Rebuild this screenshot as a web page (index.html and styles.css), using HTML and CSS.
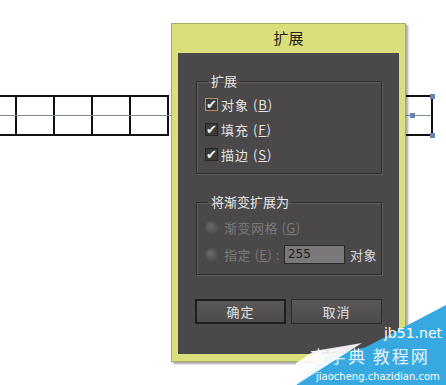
FILE: index.html
```html
<!DOCTYPE html>
<html lang="zh">
<head>
    <meta charset="UTF-8">
    <title>扩展</title>
    <link rel="stylesheet" href="styles.css">
</head>
<body>

    <!-- Artboard behind the dialog -->
    <div class="canvas">
        <div class="grid">
            <div class="cell"></div>
            <div class="cell"></div>
            <div class="cell"></div>
            <div class="cell"></div>
            <div class="cell"></div>
        </div>
        <div class="guide"></div>
        <div class="bracket"></div>
        <span class="handle h1"></span>
        <span class="handle h2"></span>
        <span class="handle h3"></span>
    </div>

    <!-- Expand dialog -->
    <div class="dialog">
        <div class="dialog-title">扩展</div>
        <div class="dialog-body">

            <fieldset class="group">
                <legend>扩展</legend>
                <label class="check focus"><span class="box">&#10004;</span>对象 (<u>B</u>)</label>
                <label class="check"><span class="box">&#10004;</span>填充 (<u>F</u>)</label>
                <label class="check"><span class="box">&#10004;</span>描边 (<u>S</u>)</label>
            </fieldset>

            <fieldset class="group group-gradient">
                <legend>将渐变扩展为</legend>
                <label class="radio"><span class="dot"></span>渐变网格 (<u>G</u>)</label>
                <label class="radio"><span class="dot"></span>指定 (<u>E</u>) :<span class="num">255</span><span class="unit">对象</span></label>
            </fieldset>

            <div class="buttons">
                <button class="btn default">确定</button>
                <button class="btn">取消</button>
            </div>
        </div>
    </div>

    <!-- Site watermark -->
    <div class="mark">
        <svg class="mark-bg" width="150" height="80" viewBox="0 0 150 80">
            <polygon points="150,0 150,80 0,80 30,52 70,42" fill="#37a9e0"/>
            <polygon points="18,46 66,38 0,80 0,58" fill="#ffffff" opacity="0.9"/>
        </svg>
        <span class="mark-site">jb51.net</span>
        <span class="mark-cn">查字典 教程网</span>
        <span class="mark-url">jiaocheng.chazidian.com</span>
    </div>

</body>
</html>
```

FILE: styles.css
```css
/* Page */
body {
    margin: 0;
    width: 446px;
    height: 385px;
    overflow: hidden;
    background-color: #ffffff;
    font-family: "Noto Sans CJK SC", "DejaVu Sans", sans-serif;
    position: relative;
}

/* Artboard */
.canvas {
    position: absolute;
    left: 0;
    top: 0;
    width: 446px;
    height: 385px;
}

.grid {
    position: absolute;
    left: -21px;
    top: 95px;
    display: flex;
    border-top: 2px solid #111;
    border-bottom: 2px solid #111;
}

.cell {
    width: 36px;
    height: 37px;
    border-right: 2px solid #111;
}

.guide {
    position: absolute;
    left: 0;
    top: 115px;
    width: 432px;
    height: 1px;
    background-color: #7f8ca0;
}

.bracket {
    position: absolute;
    left: 400px;
    top: 95px;
    width: 31px;
    height: 37px;
    border: 2px solid #111;
    border-left: none;
}

.handle {
    position: absolute;
    width: 5px;
    height: 5px;
    background-color: #6b82b8;
}

.h1 { left: 430px; top: 94px; }
.h2 { left: 430px; top: 133px; }
.h3 { left: 410px; top: 113px; }

/* Dialog window */
.dialog {
    position: absolute;
    left: 171px;
    top: 23px;
    width: 233px;
    height: 337px;
    background-color: #dbdf7b;
    border: 1px solid #a9ab66;
    box-shadow: 2px 2px 2px rgba(0, 0, 0, 0.35);
    display: flex;
    flex-direction: column;
}

.dialog-title {
    height: 29px;
    line-height: 28px;
    text-align: center;
    font-size: 15px;
    color: #222;
}

.dialog-body {
    margin: 0 6px 7px 6px;
    flex: 1;
    background-color: #4a4849;
    padding: 21px 17px 0 18px;
    display: flex;
    flex-direction: column;
}

/* Groups */
.group {
    margin: 0;
    padding: 4px 0 6px 8px;
    border: 1px solid #2f2e2f;
    box-shadow: 1px 1px 0 #5e5c5d, inset 1px 1px 0 #5e5c5d;
    box-sizing: border-box;
    min-height: 97px;
}

.group legend {
    padding: 0 3px;
    margin-left: 3px;
    font-size: 13px;
    color: #e8e8e8;
    line-height: 14px;
}

.group-gradient {
    margin-top: 21px;
    min-height: 74px;
    padding-top: 5px;
}

.check, .radio {
    display: flex;
    align-items: center;
    height: 25px;
    font-size: 13px;
    color: #e4e4e4;
    letter-spacing: 1px;
    white-space: nowrap;
}

.box {
    width: 11px;
    height: 11px;
    margin-right: 3px;
    border: 1px solid #262526;
    background-color: #3c3b3c;
    color: #f2f2f2;
    font-size: 13px;
    line-height: 10px;
    display: flex;
    justify-content: center;
    letter-spacing: 0;
}

.focus .box {
    border-color: #c78a55;
}

.radio {
    color: #7b7a7a;
    height: 27px;
    letter-spacing: 0.5px;
}

.dot {
    flex: none;
    width: 11px;
    height: 11px;
    border-radius: 50%;
    margin-right: 6px;
    background: radial-gradient(circle at 40% 40%, #6a6869, #4a4849);
    border: 1px solid #555354;
}

.num {
    flex: none;
    margin-left: 4px;
    width: 56px;
    height: 17px;
    line-height: 17px;
    padding-left: 3px;
    background-color: #7a7879;
    border: 1px solid #2a292a;
    color: #1e1e1e;
    font-family: "DejaVu Sans", sans-serif;
    font-size: 12px;
    letter-spacing: 0;
}

.unit {
    margin-left: 5px;
    color: #d8d8d8;
}

/* Buttons */
.buttons {
    display: flex;
    gap: 5px;
    margin-top: 24px;
    margin-left: -1px;
}

.btn {
    width: 91px;
    height: 25px;
    padding: 0;
    background: linear-gradient(#5a5859, #4c4a4b);
    border: 1px solid #2b2a2b;
    color: #e0e0e0;
    font-family: "Noto Sans CJK SC", sans-serif;
    font-size: 13px;
    letter-spacing: 1px;
}

.btn.default {
    border: 2px solid #1f1e1f;
}

/* Watermark */
.mark {
    position: absolute;
    right: 0;
    bottom: 0;
    width: 150px;
    height: 80px;
}

.mark-bg {
    position: absolute;
    left: 0;
    top: 0;
}

.mark-site {
    position: absolute;
    right: 4px;
    top: 20px;
    font-family: "DejaVu Sans", sans-serif;
    font-size: 14px;
    color: #ffffff;
}

.mark-cn {
    position: absolute;
    left: 14px;
    top: 40px;
    font-size: 17px;
    line-height: 22px;
    color: #ffffff;
    letter-spacing: 2px;
    opacity: 0.85;
}

.mark-url {
    position: absolute;
    left: 20px;
    top: 66px;
    font-family: "DejaVu Sans", sans-serif;
    font-size: 10px;
    line-height: 12px;
    color: #ffffff;
}
```
